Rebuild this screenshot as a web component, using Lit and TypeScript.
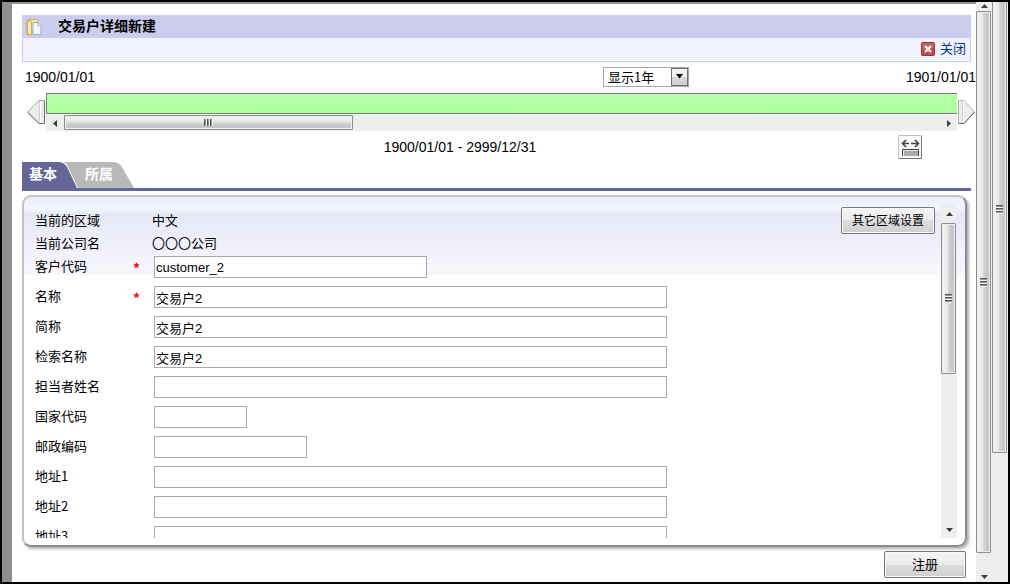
import { LitElement, html, css, svg, nothing } from "lit";
import { customElement, property, state } from "lit/decorators.js";
import { classMap } from "lit/directives/class-map.js";
import { styleMap } from "lit/directives/style-map.js";

@customElement("scroll-strip")
class ScrollStrip extends LitElement {
  @property({ type: Boolean, reflect: true }) horizontal = false;
  @property({ type: Number }) size = 50;
  @property({ type: Number }) lead = 18;
  @property({ type: Number }) tail = 18;
  /* length of the thumb that is scrolled out above the window */
  @property({ type: Number }) hiddenLength = 0;

  static styles = css`
    :host { display: flex; flex-direction: column; width: 16px; background: #eeeeee; overflow: hidden; box-sizing: border-box; }
    :host([horizontal]) { flex-direction: row; width: auto; height: 16px; }
    .end { flex: none; display: flex; align-items: center; justify-content: center; overflow: hidden; }
    .end svg { display: block; flex: none; }
    .track { flex: 1; min-width: 0; min-height: 0; display: flow-root; }
    .thumb { box-sizing: border-box; display: flex; align-items: center; justify-content: center;
      border: 1px solid #8d8d8d; border-radius: 1px; width: 15px; box-shadow: inset 0 0 0 1px #ededed;
      background: linear-gradient(90deg, #f6f6f6, #e6e6e6 44%, #d4d4d7 52%, #c2c2c8 85%, #d4d4d8); }
    :host([horizontal]) .thumb { width: auto; height: 15px;
      background: linear-gradient(#f6f6f6, #e6e6e6 44%, #d4d4d7 52%, #c2c2c8 85%, #d4d4d8); }
    .grip { width: 7px; height: 9px; background: repeating-linear-gradient(#555 0 1px, #999 1px 2px, #f4f4f4 2px 3px); }
    :host([horizontal]) .grip { width: 9px; height: 7px; background: repeating-linear-gradient(90deg, #555 0 1px, #999 1px 2px, #f4f4f4 2px 3px); }
  `;

  private arrow(first: boolean) {
    const d = this.horizontal
      ? first ? "M6 1L2 4.500L6 8Z" : "M3 1L7 4.500L3 8Z"
      : first ? "M1 6L4.500 2L8 6Z" : "M1 3L4.500 7L8 3Z";
    return html`<svg width="9" height="9" viewBox="0 0 9 9">${svg`<path d=${d} fill="#3c3c3c"/>`}</svg>`;
  }

  render() {
    const side = this.horizontal ? "width" : "height";
    return html`
      <div class="end" style=${styleMap({ [side]: `${this.lead}px` })}>${this.lead ? this.arrow(true) : nothing}</div>
      <div class="track">
        <div class="thumb" style=${styleMap({ [side]: `${this.size}%`, marginTop: `${-this.hiddenLength}px` })}><span class="grip"></span></div>
      </div>
      <div class="end" style=${styleMap({ [side]: `${this.tail}px` })}>${this.tail ? this.arrow(false) : nothing}</div>
    `;
  }
}

interface Field { id: string; label: string; value: string; width: "code" | "full" | "short" | "medium"; required?: boolean; }

const FIELDS: Field[] = [
  { id: "code", label: "客户代码", value: "customer_2", width: "code", required: true },
  { id: "name", label: "名称", value: "交易户2", width: "full", required: true },
  { id: "abbr", label: "简称", value: "交易户2", width: "full" },
  { id: "search", label: "检索名称", value: "交易户2", width: "full" },
  { id: "person", label: "担当者姓名", value: "", width: "full" },
  { id: "country", label: "国家代码", value: "", width: "short" },
  { id: "zip", label: "邮政编码", value: "", width: "medium" },
  { id: "addr1", label: "地址1", value: "", width: "full" },
  { id: "addr2", label: "地址2", value: "", width: "full" },
  { id: "addr3", label: "地址3", value: "", width: "full" },
];

@customElement("app-root")
class AppRoot extends LitElement {
  @state() private tab = 0;

  static styles = css`
    :host { display: block; height: 100vh; font: 13px/22px "Noto Sans CJK SC", sans-serif; color: #000; }
    * { box-sizing: border-box; }
    button, input, select { font: inherit; color: inherit; margin: 0; padding: 0; }
    svg { display: block; }
    .window { height: 100%; display: flex; border: 2px solid #000; background: #fff; }
    .page { flex: 1; min-width: 0; display: flex; flex-direction: column; overflow: hidden;
      border-left: 10px solid #8f8f8f; border-top: 2px solid #8f8f8f; padding: 11px 0 4px; }
    .inset { margin: 0 5px 0 10px; }
    .title { height: 23px; display: flex; align-items: center; gap: 16px; padding-left: 4px; background: #ccccee; }
    h1 { margin: 0; padding-bottom: 4px; font-size: 14px; font-weight: 700; line-height: 18px; }
    .tools { height: 24px; display: flex; justify-content: flex-end; align-items: center; padding: 0 4px;
      background: #f0f2ff; border: 1px solid #ccccee; border-top: 0; }
    .close { display: flex; align-items: center; gap: 5px; color: #003399; text-decoration: none; line-height: 18px; }
    .close span { padding-bottom: 4px; }
    .close svg { margin-bottom: 2px; }
    .dates { height: 31px; display: flex; align-items: center; padding: 0 0 2px 13px; white-space: nowrap; }
    .date { font-family: "Liberation Sans", sans-serif; font-size: 14px; }
    .picker { display: grid; margin-left: auto; width: 86px; height: 20px; }
    .picker select { grid-area: 1 / 1; appearance: none; width: 100%; height: 20px; padding-left: 4px; line-height: 18px;
      border: 1px solid #a5a5ab; border-radius: 0; background: #fff; }
    .drop { grid-area: 1 / 1; justify-self: end; align-self: center; width: 17px; height: 18px; margin-right: 1px; pointer-events: none;
      display: flex; align-items: center; justify-content: center; border: 1px solid #707070;
      background: linear-gradient(#f3f3f3 50%, #d9d9d9 50%, #cfcfcf); }
    .until { width: 287px; text-align: right; }
    .timeline { display: flex; align-items: center; padding-left: 15px; }
    .step { flex: none; border: 0; background: none; width: 19px; height: 26px; }
    .lane { flex: 1; min-width: 0; display: grid; gap: 1px; }
    .bar { height: 21px; border: 1px solid #7d7d7d; border-right: 0; background: linear-gradient(#b4ffac, #acff9c); }
    .range { height: 31px; display: flex; align-items: center; padding: 0 54px 0 10px; }
    .range p { flex: 1; margin: 0; text-align: center; }
    .fit { width: 24px; height: 24px; border: 0; background: none; }
    .tabs { display: flex; border-bottom: 3px solid #666699; height: 29px; }
    .tab { height: 26px; padding-bottom: 4px; border: 0; color: #fff; background: #b9b9b9; font-size: 14px; font-weight: 700; text-align: left; }
    .tab.first { width: 55px; padding-left: 7px; clip-path: path("M0 0H36Q42 0 45 5L55 26H0Z"); }
    .tab.next { width: 71px; padding-left: 21px; margin-left: -13px; clip-path: path("M0 0H49Q55 0 58 5L70 26H14L5 7Q3 2 0 0Z"); }
    .tab.active { background: #666699; }
    .panel { flex: 1; min-height: 0; margin: 4px 9px 0 10px; padding: 8px 8px 7px; display: flex;
      border: 2px solid #c4c4c4; border-right-color: #8c8c8c; border-bottom-color: #8c8c8c; border-radius: 9px;
      box-shadow: 2px 2px 3px #b0b0b0;
      background: linear-gradient(#ebeff9, #f2f5fe 12px, #e6e7f6 17px, #f7f8fe 78px, #fff 78px); }
    .view { flex: 1; min-width: 0; overflow: hidden; display: flex; align-items: flex-start; padding: 2px 6px 0 3px; }
    .rows { flex: 1; min-width: 0; padding-top: 1px; }
    .row { display: grid; grid-template-columns: 98px 19px 1fr; height: 30px; padding-top: 2px; line-height: 20px; }
    .row.info { height: 23px; line-height: 22px; padding-top: 1px; }
    .must { color: #f00; font-size: 14px; font-weight: 700; line-height: 24px; }
    .entry { display: block; height: 22px; margin-left: 2px; max-width: 100%; padding: 1px 1px 0; border: 1px solid #a9a9ae; border-radius: 0;
      background: #fff; font-family: "Liberation Sans", "Noto Sans CJK SC", sans-serif; outline: none; }
    .code { width: 273px; }
    .full { width: 513px; }
    .short { width: 93px; }
    .medium { width: 153px; }
    .push { height: 27px; padding-bottom: 2px; border: 1px solid #777; border-radius: 2px; box-shadow: inset 0 0 0 1px #fafafa;
      background: linear-gradient(#f4f4f4, #ebebeb 50%, #dddddd 50%, #cfcfcf); }
    .other { width: 94px; font-size: 12px; }
    .actions { display: flex; justify-content: flex-end; padding: 4px 10px 0 0; }
    .save { width: 82px; }
  `;

  render() {
    return html`
      <div class="window">
        <main class="page">
          <header class="inset">
            <div class="title">
              <svg width="16" height="18" viewBox="0 0 16 18">
                <path d="M1 2.500L5 1V15.500L1 16.500Z" fill="#efd08a" stroke="#c9964a"/>
                <path d="M4 1.500H11.500V14H4Z" fill="#f8e3a6" stroke="#d9b060"/>
                <path d="M1.500 2.500L5.500 4V17L1.500 15.500Z" fill="#fbe9b4" stroke="#d9a95a"/>
                <path d="M7 4.500H12L15 7.500V16.500H7Z" fill="#f2f9fc" stroke="#8fb0bc"/>
                <path d="M12 4.500V7.500H15" fill="#fff" stroke="#8fb0bc"/>
              </svg>
              <h1>交易户详细新建</h1>
            </div>
            <div class="tools">
              <a class="close" href="#">
                <svg width="14" height="14" viewBox="0 0 14 14">
                  <rect x=".5" y=".5" width="13" height="13" rx="1" fill="#c34a4a" stroke="#963333"/>
                  <path d="M1 1H13V6L1 8Z" fill="#d07070" opacity=".6"/>
                  <path d="M4 4L10 10M10 4L4 10" stroke="#fff" stroke-width="2.300"/>
                </svg><span>关闭</span></a>
            </div>
          </header>
          <div class="dates">
            <span class="date">1900/01/01</span>
            <div class="picker">
              <select aria-label="显示"><option>显示1年</option></select>
              <span class="drop"><svg width="9" height="5" viewBox="0 0 9 5"><path d="M1 0H8L4.500 4.500Z" fill="#000"/></svg></span>
            </div>
            <span class="date until">1901/01/01</span>
          </div>
          <div class="timeline">
            <button class="step" aria-label="向前">
              <svg width="19" height="26" viewBox="0 0 19 26">
                <path d="M.5 13L12 1.500H17.500V24.500H12Z" fill="#ececec" stroke="#a0a0a0"/>
                <path d="M1 13.500L12 24.500H17.500V2" fill="none" stroke="#707070"/>
                <path d="M12.500 2V24" stroke="#cfcfcf"/><path d="M13.500 2V24" stroke="#fff"/>
              </svg>
            </button>
            <div class="lane">
              <div class="bar"></div>
              <scroll-strip horizontal .size=${33} .lead=${18} .tail=${17}></scroll-strip>
            </div>
            <button class="step" aria-label="向后">
              <svg width="19" height="26" viewBox="0 0 19 26">
                <path d="M1.500 1.500H7L17.500 13L7 24.500H1.500Z" fill="#ececec" stroke="#b4b4b4"/>
                <path d="M1.500 24.500H7L17.500 13" fill="none" stroke="#666"/>
                <path d="M5.500 2V24" stroke="#cfcfcf"/><path d="M6.500 2V24" stroke="#fff"/>
              </svg>
            </button>
          </div>
          <div class="range">
            <p class="date">1900/01/01 - 2999/12/31</p>
            <button class="fit" aria-label="调整宽度">
              <svg width="24" height="24" viewBox="0 0 24 24">
                <path d="M.5 .5H23.500V23.500H.5Z" fill="#f8f8f8" stroke="#c4c4c4"/>
                <path d="M23.500 1V23.500H1" fill="none" stroke="#777"/>
                <path d="M4.500 8.500H11M13 8.500H20.500M8 5L4.500 8.500L8 12M17 5L20.500 8.500L17 12" fill="none" stroke="#444" stroke-width="1.600"/>
                <path d="M4.500 21V14.500H20.500V21" fill="#e8e8e8" stroke="#444"/>
                <rect x="6" y="16" width="14" height="5" fill="#ababab"/>
              </svg>
            </button>
          </div>
          <nav class="tabs inset">
            ${["基本", "所属"].map((t, i) => html`
              <button class=${classMap({ tab: true, first: i === 0, next: i > 0, active: this.tab === i })}
                @click=${() => (this.tab = i)}>${t}</button>`)}
          </nav>
          <section class="panel">
            <div class="view">
              <div class="rows">
                <div class="row info"><span>当前的区域</span><span></span><span>中文</span></div>
                <div class="row info"><span>当前公司名</span><span></span><span>〇〇〇公司</span></div>
                ${FIELDS.map((f) => html`
                  <div class="row">
                    <label for=${f.id}>${f.label}</label>
                    <span class="must">${f.required ? "*" : nothing}</span>
                    <input id=${f.id} class="entry ${f.width}" type="text" .value=${f.value}>
                  </div>`)}
              </div>
              <button class="push other">其它区域设置</button>
            </div>
            <scroll-strip .size=${51}></scroll-strip>
          </section>
          <div class="actions"><button class="push save">注册</button></div>
        </main>
        <scroll-strip .size=${97} .lead=${9} .tail=${12}></scroll-strip>
        <scroll-strip .size=${84} .hiddenLength=${36} .lead=${0} .tail=${0}></scroll-strip>
      </div>
    `;
  }
}
